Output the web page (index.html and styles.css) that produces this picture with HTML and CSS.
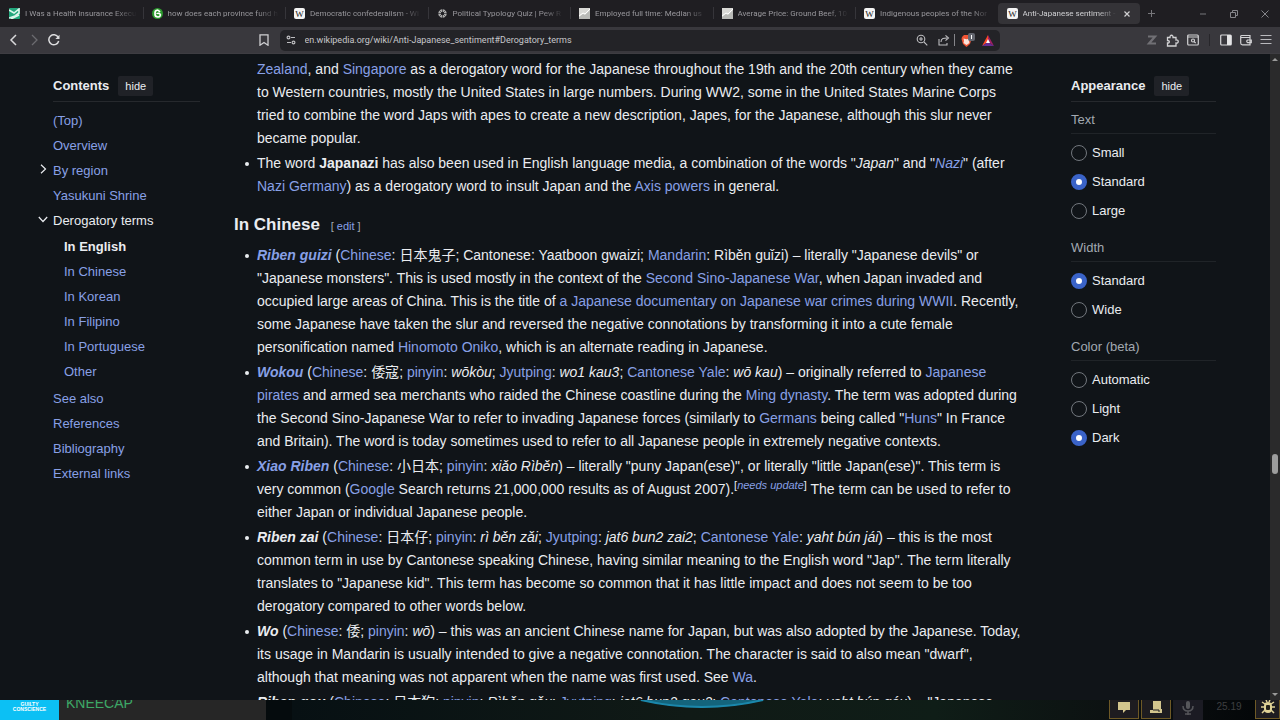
FILE: index.html
```html
<!DOCTYPE html>
<html lang="en">
<head>
<meta charset="utf-8">
<title>Anti-Japanese sentiment - Wikipedia</title>
<link rel="stylesheet" href="styles.css">
</head>
<body>
<div class="browser">
  <header class="tabstrip">
    <nav class="tabs" aria-label="Tabs">
      <button class="tab"><svg class="fav" viewBox="0 0 11 11"><rect width="11" height="11" rx="1" fill="#22a67c"/><path d="M0 2l5 3 5-4v4L6 8 0 10M2 11l8-4" stroke="#d9f5ea" stroke-width="1.6" fill="none"/></svg><span class="tab-title">I Was a Health Insurance Execu</span></button>
      <button class="tab"><svg class="fav" viewBox="0 0 11 11"><circle cx="5.500" cy="5.500" r="5.500" fill="#2c9b2e"/><path d="M6 2C3 2 3 4 3 6s1 3 3 3 3-2 2-3-3-1-3 0M6 2l2 2" fill="none" stroke="#fff" stroke-width="1.700"/></svg><span class="tab-title">how does each province fund h</span></button>
      <button class="tab"><svg class="fav" viewBox="0 0 11 11"><rect width="11" height="11" rx="2" fill="#f4f4f4"/><text x="5.500" y="8.500" text-anchor="middle" class="w">W</text></svg><span class="tab-title">Democratic confederalism - Wi</span></button>
      <button class="tab"><svg class="fav" viewBox="0 0 11 11"><circle cx="5.500" cy="5.500" r="3" fill="none" stroke="#aaa" stroke-width="2.500"/><path d="M5.500 1v9M1 5.500h9M2.300 2.300l6.400 6.400M8.700 2.300L2.300 8.700" stroke="#222226" stroke-width=".6"/></svg><span class="tab-title">Political Typology Quiz | Pew R</span></button>
      <button class="tab"><svg class="fav" viewBox="0 0 11 11"><rect width="11" height="11" fill="#d9d9d6"/><path d="M0 9l4-3 2 1 5-5v9H0z" fill="#b9bab7"/><path d="M0 8l4-3 2 1 5-5" fill="none" stroke="#fff" stroke-width="1"/></svg><span class="tab-title">Employed full time: Median us</span></button>
      <button class="tab"><svg class="fav" viewBox="0 0 11 11"><rect width="11" height="11" fill="#d9d9d6"/><path d="M0 9l4-3 2 1 5-5v9H0z" fill="#b9bab7"/><path d="M0 8l4-3 2 1 5-5" fill="none" stroke="#fff" stroke-width="1"/></svg><span class="tab-title">Average Price: Ground Beef, 10</span></button>
      <button class="tab"><svg class="fav" viewBox="0 0 11 11"><rect width="11" height="11" rx="2" fill="#f4f4f4"/><text x="5.500" y="8.500" text-anchor="middle" class="w">W</text></svg><span class="tab-title">Indigenous peoples of the Nor</span></button>
      <button class="tab active"><svg class="fav" viewBox="0 0 11 11"><rect width="11" height="11" rx="2" fill="#f4f4f4"/><text x="5.500" y="8.500" text-anchor="middle" class="w">W</text></svg><span class="tab-title">Anti-Japanese sentiment -</span><svg class="x" viewBox="0 0 6 6"><path d="M.5 .5l5 5M5.500 .5l-5 5" stroke="#d0d0d2" stroke-width="1.200"/></svg></button>
    </nav>
    <button class="newtab" aria-label="New tab"><svg width="9" height="9" viewBox="0 0 9 9"><path d="M4.500 1v7M1 4.500h7" stroke="#77777b"/></svg></button>
    <div class="winctl">
      <button aria-label="Minimize"><svg width="8" height="8" viewBox="0 0 8 8"><path d="M1 4h6" stroke="#77777b"/></svg></button>
      <button aria-label="Restore"><svg width="8" height="8" viewBox="0 0 8 8"><path d="M.5 2.500h5v5h-5zM2.500 2V.5h5v5H6" fill="none" stroke="#85858a"/></svg></button>
      <button aria-label="Close"><svg width="8" height="8" viewBox="0 0 8 8"><path d="M.5 .5l7 7M7.500 .5l-7 7" stroke="#85858a"/></svg></button>
    </div>
  </header>
  <div class="toolbar">
    <div class="navbtns">
      <button aria-label="Back"><svg width="12" height="12" viewBox="0 0 12 12"><path d="M8 1L3 6l5 5" fill="none" stroke="#d8d8da" stroke-width="1.500"/></svg></button>
      <button aria-label="Forward"><svg width="12" height="12" viewBox="0 0 12 12"><path d="M4 1l5 5-5 5" fill="none" stroke="#6c6b70" stroke-width="1.300"/></svg></button>
      <button aria-label="Reload"><svg width="12" height="12" viewBox="0 0 12 12"><path d="M10.700 7A5 5 0 1 1 10.200 3.200" fill="none" stroke="#dcdcde" stroke-width="1.500"/><path d="M11.500 .8v4.200H7.400z" fill="#dcdcde"/></svg></button>
    </div>
    <button class="bookmark" aria-label="Bookmark"><svg width="10" height="12" viewBox="0 0 10 12"><path d="M1 .8h8v10.400L5 8.500l-4 2.700z" fill="none" stroke="#cfcfd2" stroke-width="1.300"/></svg></button>
    <div class="address">
      <svg width="10" height="10" viewBox="0 0 10 10"><g fill="none" stroke="#bdbdc0" stroke-width="1.200"><circle cx="2.500" cy="2.500" r="1.400"/><circle cx="7.500" cy="7.500" r="1.400"/><path d="M5 2.500h4M1 7.500h4"/></g></svg>
      <input class="url" aria-label="Address" value="en.wikipedia.org/wiki/Anti-Japanese_sentiment#Derogatory_terms">
      <button class="a1" aria-label="Zoom"><svg width="12" height="12" viewBox="0 0 12 12"><g fill="none" stroke="#bdbdc0" stroke-width="1.100"><circle cx="5" cy="5" r="3.800"/><path d="M8 8l3.300 3.300M3 5h4M5 3v4"/></g></svg></button>
      <button class="a2" aria-label="Share"><svg width="12" height="12" viewBox="0 0 12 12"><path d="M1 5v6h8V9M3 8c0-4 3-4 6-4M7.500 1.300L10.500 4 7.500 6.700" fill="none" stroke="#bdbdc0" stroke-width="1.100"/></svg></button>
      <i class="sep"></i>
      <button class="shield" aria-label="Shields"><svg width="18" height="15" viewBox="0 0 18 15"><path d="M1 4l2-2h5l2 2 .5 2-1.500 5-3.500 3L2 11 .5 6z" fill="#ef5434"/><path d="M2.500 5.500l3 .7 3-.7L8 8l.5 2-3 2-3-2L3 8z" fill="#fbe2da"/><rect x="7" width="7" height="8" rx="2" fill="#63666f"/><path d="M10.500 2v4" stroke="#fff"/></svg></button>
      <button class="bat" aria-label="Rewards"><svg width="12" height="11" viewBox="0 0 12 11"><path d="M6 0L0 11l6-4z" fill="#ff4724"/><path d="M6 0l6 11-6-4z" fill="#9e1f63"/><path d="M0 11h12L6 7z" fill="#662d91"/><path d="M6 4L4 8h4z" fill="#fff"/></svg></button>
    </div>
    <div class="actions">
      <button aria-label="Zotero"><svg width="12" height="12" viewBox="0 0 12 12"><path d="M2 2.500h7L3 9.500h7" fill="none" stroke="#717075" stroke-width="2.200"/></svg></button>
      <button aria-label="Extensions"><svg width="13" height="13" viewBox="0 0 13 13"><path d="M1.500 3.500H4C3.500 .5 7.500 .5 7 3.500h3v2.500c3-.5 3 3.500 0 3v3H1.500V9C4 9 4 6.500 1.500 6.500z" fill="none" stroke="#d2d2d4" stroke-width="1.300"/></svg></button>
      <button aria-label="Search tabs"><svg width="12" height="12" viewBox="0 0 12 12"><g fill="none" stroke="#d2d2d4" stroke-width="1.200"><rect x=".7" y="1" width="10.600" height="10" rx="1"/><path d="M1 3h10M7 7.500l1.700 1.700"/><circle cx="6" cy="6.500" r="1.500"/></g></svg></button>
      <i class="sep"></i>
      <button aria-label="Sidebar"><svg width="12" height="12" viewBox="0 0 12 12"><rect x=".7" y="1" width="10.600" height="10" rx="1" fill="none" stroke="#d8d8da" stroke-width="1.200"/><path d="M7 1h4v10H7z" fill="#e5e5e6"/></svg></button>
      <button aria-label="Wallet"><svg width="12" height="12" viewBox="0 0 12 12"><path d="M10 3.500V1.500H1.500Q.7 1.500 .7 3v6q0 1.800 1.800 1.800H10V3.500H1M11.300 6H7.500q-1.500 1.300 0 2.600h3.800z" fill="none" stroke="#d2d2d4" stroke-width="1.200"/></svg></button>
      <button aria-label="Menu"><svg width="12" height="12" viewBox="0 0 12 12"><path d="M.5 1.500h11M.5 5.500h11M.5 9.500h11" stroke="#b9b9bd" stroke-width="1"/></svg></button>
    </div>
  </div>
  <div class="viewport">
    <div class="page">
      <nav class="toc" aria-label="Contents">
        <div class="panel-head"><h2>Contents</h2><button class="hide">hide</button></div>
        <ul>
          <li><a href="#top">(Top)</a></li>
          <li><a href="#o">Overview</a></li>
          <li><svg class="arrow" width="10" height="10" viewBox="0 0 10 10"><path d="M3 .8L7.500 5 3 9.200" fill="none" stroke="#eaecf0" stroke-width="1.200"/></svg><a href="#r">By region</a></li>
          <li><a href="#y">Yasukuni Shrine</a></li>
          <li><svg class="arrow" width="10" height="10" viewBox="0 0 10 10"><path d="M.8 3L5 7.500 9.200 3" fill="none" stroke="#eaecf0" stroke-width="1.200"/></svg><a class="cur" href="#d">Derogatory terms</a>
          <ul class="sub">
            <li><a class="cur bold" href="#e">In English</a></li>
            <li><a href="#c">In Chinese</a></li>
            <li><a href="#k">In Korean</a></li>
            <li><a href="#f">In Filipino</a></li>
            <li><a href="#p">In Portuguese</a></li>
            <li><a href="#ot">Other</a></li>
          </ul></li>
          <li><a href="#s">See also</a></li>
          <li><a href="#re">References</a></li>
          <li><a href="#b">Bibliography</a></li>
          <li><a href="#x">External links</a></li>
        </ul>
      </nav>
      <main class="article">
        <ul class="terms">
          <li><a href="#">Zealand</a>, and <a href="#">Singapore</a> as a derogatory word for the Japanese throughout the 19th and the 20th century when they came to Western countries, mostly the United States in large numbers. During WW2, some in the United States Marine Corps tried to combine the word Japs with apes to create a new description, Japes, for the Japanese, although this slur never became popular.</li>
          <li>The word <b>Japanazi</b> has also been used in English language media, a combination of the words "<i>Japan</i>" and "<i><a href="#">Nazi</a></i>" (after <a href="#">Nazi Germany</a>) as a derogatory word to insult Japan and the <a href="#">Axis powers</a> in general.</li>
        </ul>
        <h3 id="c">In Chinese <span class="edit">[ <a href="#">edit</a> ]</span></h3>
        <ul class="terms">
          <li><a href="#"><b><i>Riben guizi</i></b></a> (<a href="#">Chinese</a>: <span lang="zh">日本鬼子</span>; Cantonese: Yaatboon gwaizi; <a href="#">Mandarin</a>: Rìběn guǐzi) – literally "Japanese devils" or "Japanese monsters". This is used mostly in the context of the <a href="#">Second Sino-Japanese War</a>, when Japan invaded and occupied large areas of China. This is the title of <a href="#">a Japanese documentary on Japanese war crimes during WWII</a>. Recently, some Japanese have taken the slur and reversed the negative connotations by transforming it into a cute female personification named <a href="#">Hinomoto Oniko</a>, which is an alternate reading in Japanese.</li>
          <li><a href="#"><b><i>Wokou</i></b></a> (<a href="#">Chinese</a>: <span lang="zh">倭寇</span>; <a href="#">pinyin</a>: <i>wōkòu</i>; <a href="#">Jyutping</a>: <i>wo1 kau3</i>; <a href="#">Cantonese Yale</a>: <i>wō kau</i>) – originally referred to <a href="#">Japanese pirates</a> and armed sea merchants who raided the Chinese coastline during the <a href="#">Ming dynasty</a>. The term was adopted during the Second Sino-Japanese War to refer to invading Japanese forces (similarly to <a href="#">Germans</a> being called "<a href="#">Huns</a>" In France and Britain). The word is today sometimes used to refer to all Japanese people in extremely negative contexts.</li>
          <li><a href="#"><b><i>Xiao Riben</i></b></a> (<a href="#">Chinese</a>: <span lang="zh">小日本</span>; <a href="#">pinyin</a>: <i>xiǎo Rìběn</i>) – literally "puny Japan(ese)", or literally "little Japan(ese)". This term is very common (<a href="#">Google</a> Search returns 21,000,000 results as of August 2007).<sup>[<i><a href="#">needs update</a></i>]</sup> The term can be used to refer to either Japan or individual Japanese people.</li>
          <li><b><i>Riben zai</i></b> (<a href="#">Chinese</a>: <span lang="zh">日本仔</span>; <a href="#">pinyin</a>: <i>rì běn zǎi</i>; <a href="#">Jyutping</a>: <i>jat6 bun2 zai2</i>; <a href="#">Cantonese Yale</a>: <i>yaht bún jái</i>) – this is the most common term in use by Cantonese speaking Chinese, having similar meaning to the English word "Jap". The term literally translates to "Japanese kid". This term has become so common that it has little impact and does not seem to be too derogatory compared to other words below.</li>
          <li><b><i>Wo</i></b> (<a href="#">Chinese</a>: <span lang="zh">倭</span>; <a href="#">pinyin</a>: <i>wō</i>) – this was an ancient Chinese name for Japan, but was also adopted by the Japanese. Today, its usage in Mandarin is usually intended to give a negative connotation. The character is said to also mean "dwarf", although that meaning was not apparent when the name was first used. See <a href="#">Wa</a>.</li>
          <li><b><i>Riben gou</i></b> (<a href="#">Chinese</a>: <span lang="zh">日本狗</span>; <a href="#">pinyin</a>: <i>Rìběn gǒu</i>; <a href="#">Jyutping</a>: <i>jat6 bun2 gau2</i>; <a href="#">Cantonese Yale</a>: <i>yaht bún gáu</i>) – "Japanese</li>
        </ul>
      </main>
      <aside class="appearance">
        <div class="panel-head"><h2>Appearance</h2><button class="hide">hide</button></div>
        <fieldset><legend>Text</legend>
          <label><input type="radio" name="t">Small</label>
          <label><input type="radio" name="t" checked>Standard</label>
          <label><input type="radio" name="t">Large</label>
        </fieldset>
        <fieldset><legend>Width</legend>
          <label><input type="radio" name="w" checked>Standard</label>
          <label><input type="radio" name="w">Wide</label>
        </fieldset>
        <fieldset><legend>Color (beta)</legend>
          <label><input type="radio" name="c">Automatic</label>
          <label><input type="radio" name="c">Light</label>
          <label><input type="radio" name="c" checked>Dark</label>
        </fieldset>
      </aside>
    </div>
    <div class="scrollbar"><i class="up"></i><i class="thumb"></i><i class="down"></i></div>
  </div>
</div>
<footer class="under">
  <div class="cover"><span>GUILTY</span><span>CONSCIENCE</span></div>
  <div class="track">KNEECAP</div>
  <div class="game">
    <svg class="arc" viewBox="0 0 126 8"><path d="M0 0Q63 15 126 0z" fill="#14647c"/><path d="M2 0Q63 14 124 0" fill="none" stroke="#1b87ab" stroke-width="2"/></svg>
    <button class="gold" aria-label="Chat"><svg width="12" height="12" viewBox="0 0 12 12"><path d="M0 1h12v8H8l-3 3V9H0z" fill="#d3c58e"/></svg></button>
    <button class="gold" aria-label="Log"><svg width="12" height="12" viewBox="0 0 12 12"><path d="M3 0h8v8h1v4H0V9h3z" fill="#d3c58e"/><path d="M3 9h6v2" fill="none" stroke="#1b1b20"/></svg></button>
    <button class="mic" aria-label="Microphone"><svg width="12" height="14" viewBox="0 0 12 14"><rect x="4" width="4" height="8" rx="2" fill="#55565a"/><path d="M1 5q0 5 5 5t5-5M6 10v4M3 13h6" fill="none" stroke="#55565a" stroke-width="1.500"/></svg></button>
    <span class="time">25.19</span>
    <button class="gold bug" aria-label="Report bug"><svg width="14" height="14" viewBox="0 0 14 14"><path d="M1 2l3 2M13 2l-3 2M0 7h3M14 7h-3M1 13l3-3M13 13l-3-3M5 0l1 2M9 0L8 2" stroke="#e0d296" stroke-width="1.500"/><rect x="3" y="2" width="8" height="11" rx="4" fill="#e0d296"/><rect x="5" y="5" width="4" height="5" rx="1" fill="#25221a"/></svg></button>
  </div>
</footer>
</body>
</html>
```
FILE: styles.css
```css
* { box-sizing: border-box; }
body {
  margin: 0;
  height: 100vh;
  display: flex;
  flex-direction: column;
  overflow: hidden;
  background: #101418;
  color: #eaecf0;
  font-family: "Liberation Sans", Arial, "Noto Sans CJK SC", sans-serif;
  font-size: 14px;
}
button { border: 0; padding: 0; background: none; color: inherit; font: inherit; display: flex; align-items: center; justify-content: center; }
a { color: #88a0e6; text-decoration: none; }
ul { list-style: none; margin: 0; padding: 0; }
svg { flex: none; }

.browser { flex: 1; min-height: 0; display: flex; flex-direction: column; }
.tabstrip { height: 27px; flex: none; display: flex; align-items: center; background: #1f1e22; }
.tabs { display: flex; flex: 0 1 1140px; min-width: 0; }
.tab { flex: 1 1 0; min-width: 0; height: 21px; padding: 0 6px 0 9px; gap: 5px; justify-content: flex-start; font: 8px Roboto, sans-serif; color: #98979c; border-radius: 4px; position: relative; }
.tab + .tab::before { content: ""; position: absolute; left: 0; top: 4px; height: 12px; width: 1px; background: #36353a; }
.tab.active { background: #343337; color: #d0d0d3; }
.tab.active::before { display: none; }
.fav { width: 11px; height: 11px; }
.w { font: 9px "Liberation Serif", serif; fill: #222; }
.tab-title { flex: 1; min-width: 0; text-align: left; overflow: hidden; white-space: nowrap; -webkit-mask-image: linear-gradient(90deg, #000 80%, transparent); mask-image: linear-gradient(90deg, #000 80%, transparent); }
.x { width: 6px; height: 6px; margin: 0 4px 0 2px; }
.newtab { width: 23px; }
.winctl { margin-left: auto; display: flex; }
.winctl button { width: 31px; }

.toolbar { height: 27px; flex: none; display: flex; align-items: center; background: #39383d; border-bottom: 1px solid #3e3d42; }
.navbtns { display: flex; gap: 8px; padding-left: 8px; margin-right: 52px; }
.bookmark { margin-left: auto; margin-right: 11px; }
.address { flex: 0 1 720px; height: 21px; border-radius: 5px; background: #232327; display: flex; align-items: center; padding: 0 6px; }
.url { flex: 1; min-width: 0; border: 0; outline: 0; background: none; color: #c7c7ca; font: 9px Roboto, sans-serif; padding: 0 0 0 9px; }
.a1 { margin-right: 10px; }
.a2 { margin-right: 4px; }
.sep { width: 1px; height: 12px; background: #85858a; margin-right: 6px; }
.bat { margin-left: 3px; }
.actions { margin-left: auto; display: flex; align-items: center; gap: 8px; padding-right: 8px; }
.actions .sep { background: #27262a; margin: 0 2px; }

.viewport { flex: 1; min-height: 0; display: flex; overflow: hidden; }
.page { flex: 1; min-width: 0; display: flex; align-items: flex-start; height: 100%; overflow: hidden; }
.toc { width: 200px; flex: none; padding: 22px 0 0 53px; }
.panel-head { display: flex; align-items: center; gap: 9px; height: 26px; border-bottom: 1px solid #26292d; padding-bottom: 5px; }
.panel-head h2 { margin: 0; font-size: 13px; line-height: 20px; }
.hide { height: 20px; padding: 0 7px; background: #202227; border-radius: 2px; font-size: 11px; }
.toc > ul { padding-top: 6px; font-size: 13px; line-height: 25px; }
.toc li { position: relative; white-space: nowrap; }
.sub { padding-left: 11px; margin: 1px 0 2px; }
.arrow { position: absolute; left: -15px; top: 6px; }
.cur { color: #eaecf0; }
.bold { font-weight: bold; }

.article { flex: 1; min-width: 0; padding: 4px 0 0 34px; line-height: 23px; margin-right: 46px; }
.terms { padding-left: 23px; }
.terms li { position: relative; margin-bottom: 2px; }
.terms li::before { content: ""; position: absolute; left: -12px; top: 10px; width: 4px; height: 4px; border-radius: 50%; background: #eaecf0; }
.terms:first-child li:first-child::before { display: none; }
.terms [lang] { line-height: 1; }
h3 { margin: 13px 0 4px; font-size: 17px; line-height: 28px; }
.edit { font-size: 11px; font-weight: normal; margin-left: 6px; color: #a2a9b1; }
sup { font-size: 11px; line-height: 1; vertical-align: 5px; }

.appearance { width: 145px; flex: none; padding-top: 22px; margin-right: 54px; font-size: 13px; }
fieldset { border: 0; margin: 0 0 5px; padding: 0; min-width: 0; }
legend { width: 100%; padding: 8px 0 0; line-height: 19px; height: 32px; border-bottom: 1px solid #202428; margin-bottom: 4px; color: #a2a9b1; }
label { display: flex; align-items: center; gap: 5px; height: 29px; }
input[type=radio] { appearance: none; margin: 0; width: 16px; height: 16px; border: 1px solid #72777d; border-radius: 50%; }
input[type=radio]:checked { border: 5px solid #3a63c8; background: #fff; }

.scrollbar { width: 10px; flex: none; background: #2a2a2b; display: flex; flex-direction: column; align-items: center; padding: 4px 0; }
.up, .down { border: 3px solid transparent; }
.up { border-bottom-color: #9a9a9a; border-top: 0; }
.down { border-top-color: #9a9a9a; border-bottom: 0; margin-top: auto; }
.thumb { width: 6px; height: 20px; border-radius: 3px; background: #9d9d9d; margin-top: 393px; }

.under { height: 20px; flex: none; display: flex; background: #050b0d; overflow: hidden; }
.cover { width: 59px; background: #0cc0f4; display: flex; flex-direction: column; align-items: center; font-size: 5px; line-height: 5px; font-weight: bold; color: #fff; padding-top: 2px; }
.track { width: 207px; background: #262626; color: #3da866; padding-left: 7px; line-height: 6px; }
.game { flex: 1; margin-left: 26px; display: flex; justify-content: flex-end; position: relative; background: linear-gradient(90deg, #071013, #101a16 40%, #0f1d17 65%, #0c1011 85%, #020507); }
.arc { position: absolute; left: 347px; top: 0; width: 126px; height: 8px; }
.gold { width: 30px; height: 19px; border: 1px solid #6e5926; border-top: 0; background: #1e1c20; margin-right: 2px; padding-bottom: 5px; }
.mic { width: 30px; background: #1b1b23; padding-bottom: 4px; }
.time { width: 52px; text-align: center; font-size: 10px; line-height: 14px; color: #3d3f40; }
.bug { width: 25px; margin: 0; }
```
